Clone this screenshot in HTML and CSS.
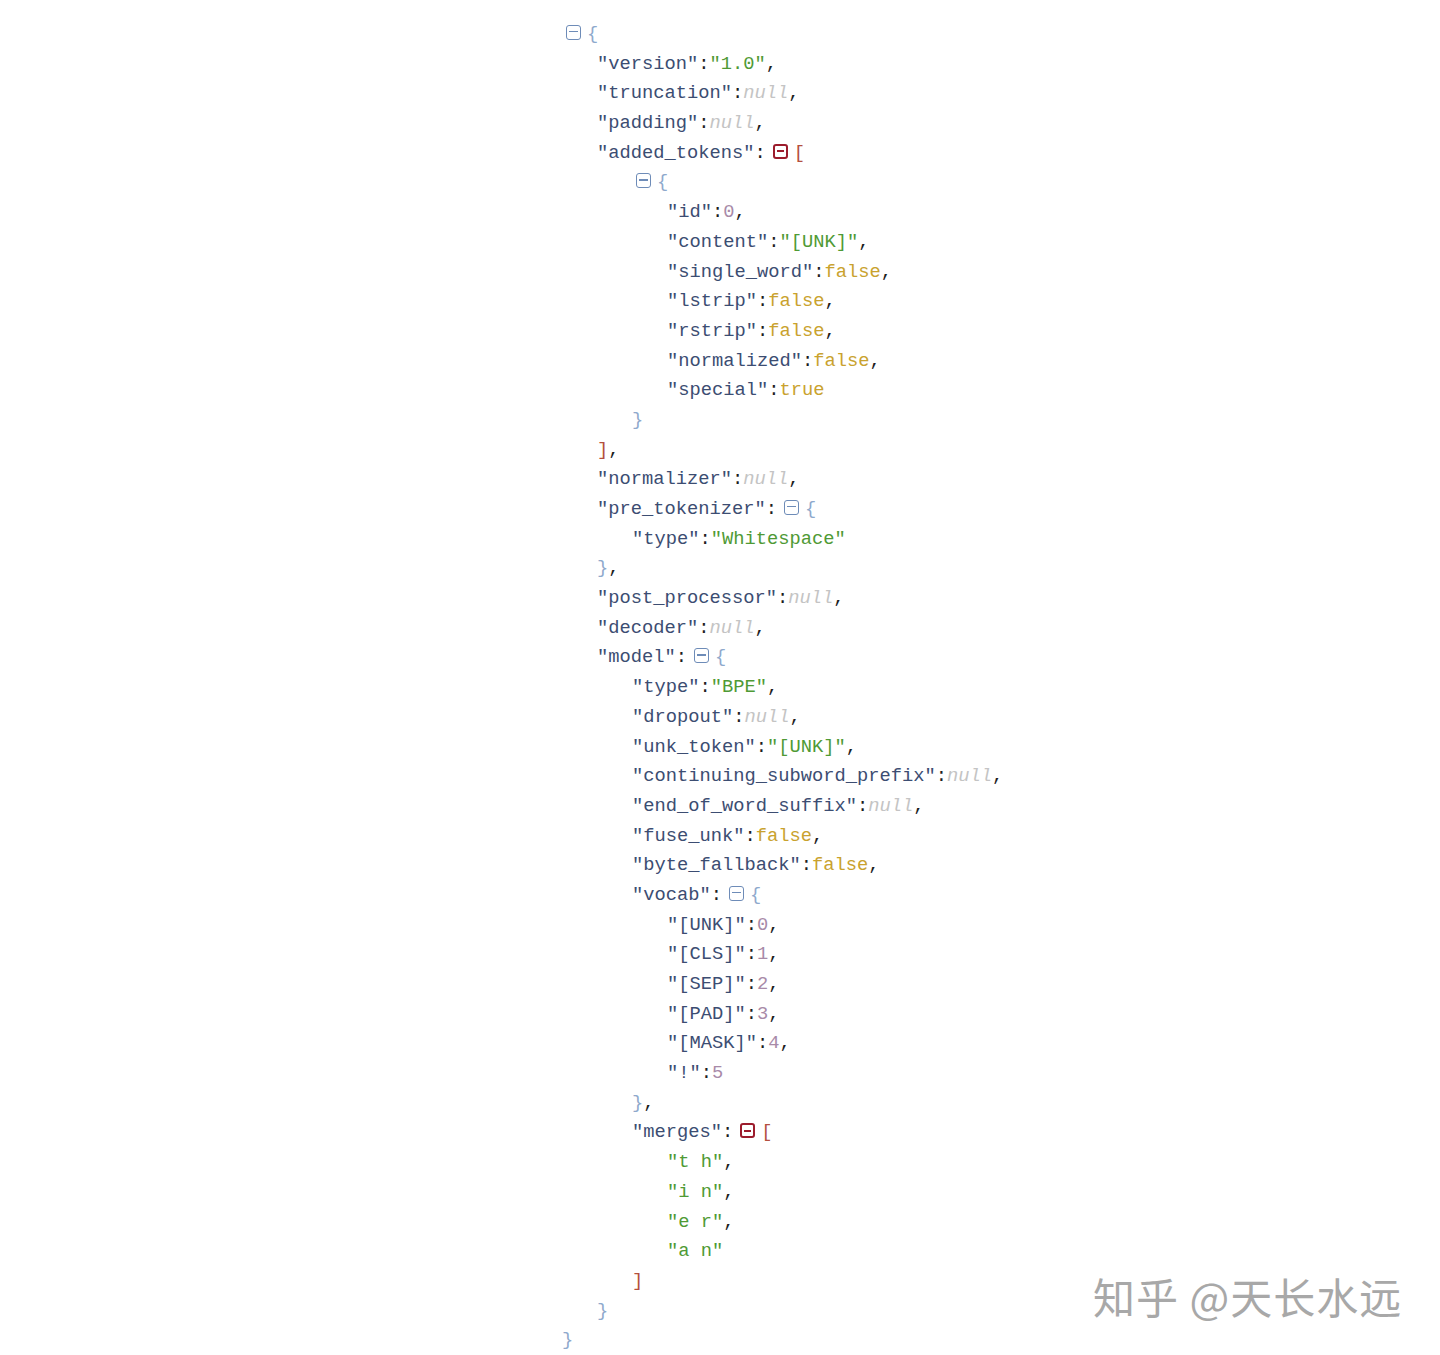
FILE: index.html
```html
<!DOCTYPE html>
<html>
<head>
<meta charset="utf-8">
<link rel="stylesheet" href="styles.css">
</head>
<body>
<div class="viewer">
<div class="ln d0"><span class="tg"></span><span class="br">{</span></div>
<div class="ln d1"><span class="k">"version"</span><span class="p">:</span><span class="s">"1.0"</span><span class="p">,</span></div>
<div class="ln d1"><span class="k">"truncation"</span><span class="p">:</span><span class="n">null</span><span class="p">,</span></div>
<div class="ln d1"><span class="k">"padding"</span><span class="p">:</span><span class="n">null</span><span class="p">,</span></div>
<div class="ln d1"><span class="k">"added_tokens"</span><span class="p">:</span><span class="tg arr after"></span><span class="bk">[</span></div>
<div class="ln d2"><span class="tg"></span><span class="br">{</span></div>
<div class="ln d3"><span class="k">"id"</span><span class="p">:</span><span class="num">0</span><span class="p">,</span></div>
<div class="ln d3"><span class="k">"content"</span><span class="p">:</span><span class="s">"[UNK]"</span><span class="p">,</span></div>
<div class="ln d3"><span class="k">"single_word"</span><span class="p">:</span><span class="b">false</span><span class="p">,</span></div>
<div class="ln d3"><span class="k">"lstrip"</span><span class="p">:</span><span class="b">false</span><span class="p">,</span></div>
<div class="ln d3"><span class="k">"rstrip"</span><span class="p">:</span><span class="b">false</span><span class="p">,</span></div>
<div class="ln d3"><span class="k">"normalized"</span><span class="p">:</span><span class="b">false</span><span class="p">,</span></div>
<div class="ln d3"><span class="k">"special"</span><span class="p">:</span><span class="b">true</span></div>
<div class="ln d2"><span class="br">}</span></div>
<div class="ln d1"><span class="bk">]</span><span class="p">,</span></div>
<div class="ln d1"><span class="k">"normalizer"</span><span class="p">:</span><span class="n">null</span><span class="p">,</span></div>
<div class="ln d1"><span class="k">"pre_tokenizer"</span><span class="p">:</span><span class="tg after"></span><span class="br">{</span></div>
<div class="ln d2"><span class="k">"type"</span><span class="p">:</span><span class="s">"Whitespace"</span></div>
<div class="ln d1"><span class="br">}</span><span class="p">,</span></div>
<div class="ln d1"><span class="k">"post_processor"</span><span class="p">:</span><span class="n">null</span><span class="p">,</span></div>
<div class="ln d1"><span class="k">"decoder"</span><span class="p">:</span><span class="n">null</span><span class="p">,</span></div>
<div class="ln d1"><span class="k">"model"</span><span class="p">:</span><span class="tg after"></span><span class="br">{</span></div>
<div class="ln d2"><span class="k">"type"</span><span class="p">:</span><span class="s">"BPE"</span><span class="p">,</span></div>
<div class="ln d2"><span class="k">"dropout"</span><span class="p">:</span><span class="n">null</span><span class="p">,</span></div>
<div class="ln d2"><span class="k">"unk_token"</span><span class="p">:</span><span class="s">"[UNK]"</span><span class="p">,</span></div>
<div class="ln d2"><span class="k">"continuing_subword_prefix"</span><span class="p">:</span><span class="n">null</span><span class="p">,</span></div>
<div class="ln d2"><span class="k">"end_of_word_suffix"</span><span class="p">:</span><span class="n">null</span><span class="p">,</span></div>
<div class="ln d2"><span class="k">"fuse_unk"</span><span class="p">:</span><span class="b">false</span><span class="p">,</span></div>
<div class="ln d2"><span class="k">"byte_fallback"</span><span class="p">:</span><span class="b">false</span><span class="p">,</span></div>
<div class="ln d2"><span class="k">"vocab"</span><span class="p">:</span><span class="tg after"></span><span class="br">{</span></div>
<div class="ln d3"><span class="k">"[UNK]"</span><span class="p">:</span><span class="num">0</span><span class="p">,</span></div>
<div class="ln d3"><span class="k">"[CLS]"</span><span class="p">:</span><span class="num">1</span><span class="p">,</span></div>
<div class="ln d3"><span class="k">"[SEP]"</span><span class="p">:</span><span class="num">2</span><span class="p">,</span></div>
<div class="ln d3"><span class="k">"[PAD]"</span><span class="p">:</span><span class="num">3</span><span class="p">,</span></div>
<div class="ln d3"><span class="k">"[MASK]"</span><span class="p">:</span><span class="num">4</span><span class="p">,</span></div>
<div class="ln d3"><span class="k">"!"</span><span class="p">:</span><span class="num">5</span></div>
<div class="ln d2"><span class="br">}</span><span class="p">,</span></div>
<div class="ln d2"><span class="k">"merges"</span><span class="p">:</span><span class="tg arr after"></span><span class="bk">[</span></div>
<div class="ln d3"><span class="s">"t h"</span><span class="p">,</span></div>
<div class="ln d3"><span class="s">"i n"</span><span class="p">,</span></div>
<div class="ln d3"><span class="s">"e r"</span><span class="p">,</span></div>
<div class="ln d3"><span class="s">"a n"</span></div>
<div class="ln d2"><span class="bk">]</span></div>
<div class="ln d1"><span class="br">}</span></div>
<div class="ln d0"><span class="br">}</span></div>
</div>
<div class="watermark">知乎 @天长水远</div>
</body>
</html>
```

FILE: styles.css
```css
html, body {
  margin: 0;
  padding: 0;
  background: #ffffff;
}
body {
  width: 1440px;
  height: 1355px;
  position: relative;
  overflow: hidden;
}
.viewer {
  padding: 20px 0 0 562px;
  font-family: "Liberation Mono", "Courier New", monospace;
  font-size: 18.75px;
  line-height: 29.7px;
  color: #222;
}
.ln {
  height: 29.7px;
  white-space: pre;
}
.d0 { padding-left: 0; }
.d1 { padding-left: 35px; }
.d2 { padding-left: 70px; }
.d3 { padding-left: 105px; }
.k { color: #3c4d72; }
.s { color: #4f9a35; }
.b { color: #c9a22e; }
.n { color: #c4c4c4; font-style: italic; }
.num { color: #a88aa8; }
.p { color: #1e1e1e; }
.br { color: #8fa9cc; }
.bk { color: #b4503f; }
.tg {
  display: inline-block;
  box-sizing: border-box;
  width: 15px;
  height: 15px;
  border: 1.8px solid #6e8cb8;
  border-radius: 3px;
  margin: 0 6px 0 4px;
  vertical-align: -1px;
  position: relative;
}
.tg::after {
  content: "";
  position: absolute;
  left: 2px;
  right: 2px;
  top: 4.8px;
  height: 1.6px;
  background: #6e8cb8;
}
.tg.arr {
  border-color: #9c1c2c;
  border-width: 2px;
}
.tg.arr::after {
  background: #9c1c2c;
  top: 4.5px;
  height: 2px;
}
.tg.after {
  margin-left: 7px;
}
.watermark {
  position: absolute;
  left: 1093px;
  top: 1266px;
  font-family: "Noto Sans CJK SC", sans-serif;
  font-size: 42px;
  line-height: 60px;
  color: #a8a8a8;
  letter-spacing: 1px;
  white-space: pre;
}
```
